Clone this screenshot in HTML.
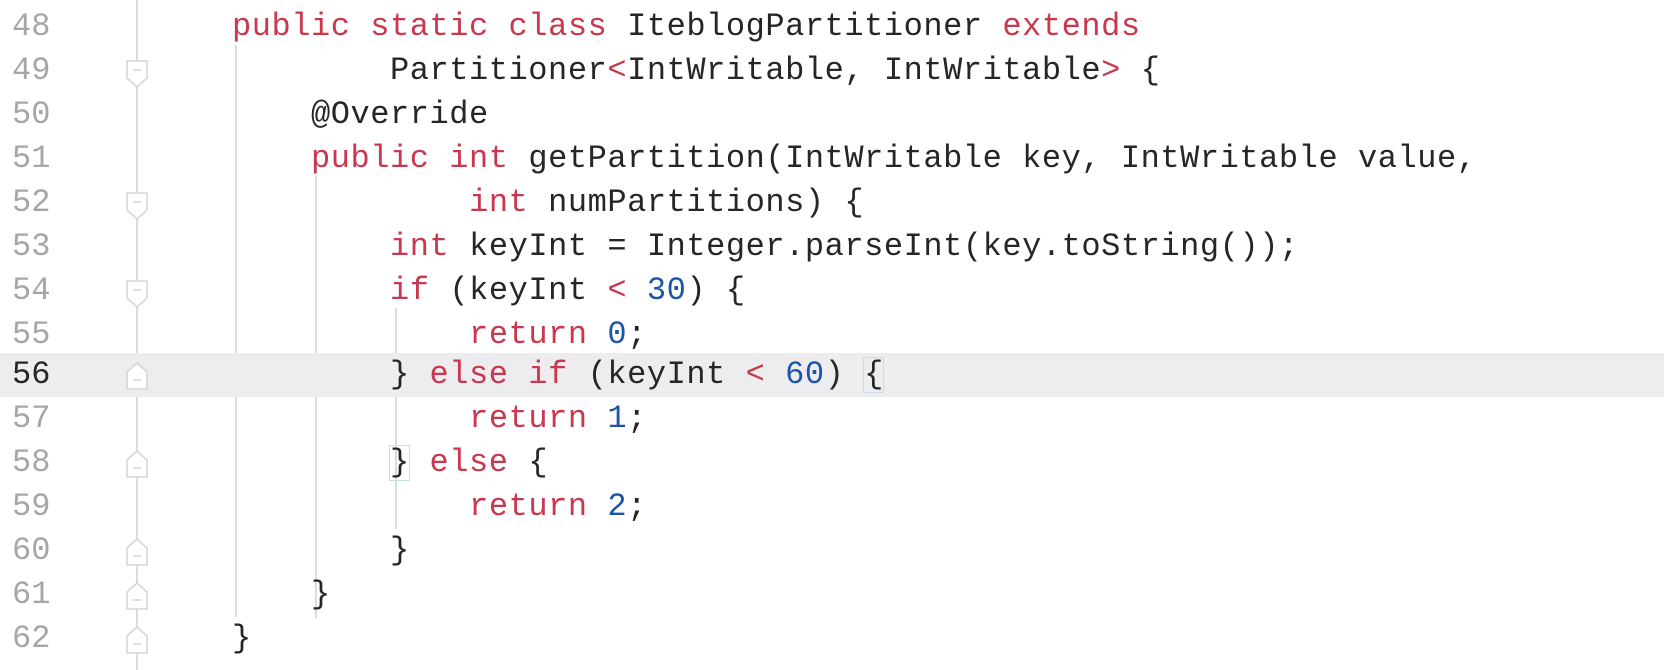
<!DOCTYPE html>
<html><head><meta charset="utf-8"><style>
html,body{margin:0;padding:0;background:#fff;width:1664px;height:670px;overflow:hidden;position:relative}
.l{position:absolute;left:0;width:1664px;height:44px;line-height:44px;font-family:"Liberation Mono",monospace;font-size:32px;letter-spacing:0.55px;white-space:pre;color:#262626}
.n{position:absolute;left:12px;color:#a6a6a6;letter-spacing:0}
.c{position:absolute;left:153px}
.k{color:#c8384f}.d{color:#1c55a8}
.hl{background:#ededf0}
.g{position:absolute;width:2px;background:#dcdcdc}
.f{position:absolute;left:126px;width:22px;height:28px}
.bx{position:absolute;border:1.5px solid #c8dceb}
</style></head><body>
<div class="g" style="left:136px;top:0;height:670px"></div>
<div class="g" style="left:235px;top:45px;height:572px"></div>
<div class="g" style="left:315px;top:176px;height:442px"></div>
<div class="g" style="left:395px;top:308px;height:221px"></div>

<div class="l hl" style="top:353px"></div>

<div class="l" style="top:5px"><span class="n">48</span><span class="c">    <span class="k">public static class</span> IteblogPartitioner <span class="k">extends</span></span></div>
<div class="l" style="top:49px"><span class="n">49</span><span class="c">            Partitioner<span class="k">&lt;</span>IntWritable, IntWritable<span class="k">&gt;</span> {</span></div>
<div class="l" style="top:93px"><span class="n">50</span><span class="c">        @Override</span></div>
<div class="l" style="top:137px"><span class="n">51</span><span class="c">        <span class="k">public int</span> getPartition(IntWritable key, IntWritable value,</span></div>
<div class="l" style="top:181px"><span class="n">52</span><span class="c">                <span class="k">int</span> numPartitions) {</span></div>
<div class="l" style="top:225px"><span class="n">53</span><span class="c">            <span class="k">int</span> keyInt = Integer.parseInt(key.toString());</span></div>
<div class="l" style="top:269px"><span class="n">54</span><span class="c">            <span class="k">if</span> (keyInt <span class="k">&lt;</span> <span class="d">30</span>) {</span></div>
<div class="l" style="top:313px"><span class="n">55</span><span class="c">                <span class="k">return</span> <span class="d">0</span>;</span></div>
<div class="l" style="top:353px"><span class="n" style="color:#262626">56</span><span class="c">            } <span class="k">else if</span> (keyInt <span class="k">&lt;</span> <span class="d">60</span>) {</span></div>
<div class="l" style="top:397px"><span class="n">57</span><span class="c">                <span class="k">return</span> <span class="d">1</span>;</span></div>
<div class="l" style="top:441px"><span class="n">58</span><span class="c">            } <span class="k">else</span> {</span></div>
<div class="l" style="top:485px"><span class="n">59</span><span class="c">                <span class="k">return</span> <span class="d">2</span>;</span></div>
<div class="l" style="top:529px"><span class="n">60</span><span class="c">            }</span></div>
<div class="l" style="top:573px"><span class="n">61</span><span class="c">        }</span></div>
<div class="l" style="top:617px"><span class="n">62</span><span class="c">    }</span></div>

<div class="bx" style="left:863px;top:357px;width:19px;height:34px"></div>
<div class="bx" style="left:389px;top:445px;width:19px;height:34px"></div>

<svg width="0" height="0" style="position:absolute"><defs>
<g id="dn"><path d="M1 1H21V18L11 27L1 18Z" fill="#fff" stroke="#d6d6d6" stroke-width="1.6"/><path d="M7 10H15" stroke="#d0d0d0" stroke-width="1.4"/></g>
<g id="up"><path d="M1 27H21V10L11 1L1 10Z" fill="#fff" stroke="#d6d6d6" stroke-width="1.6"/><path d="M7 18H15" stroke="#d0d0d0" stroke-width="1.4"/></g>
</defs></svg>
<svg class="f" style="top:60px" viewBox="0 0 22 28"><use href="#dn"/></svg>
<svg class="f" style="top:192px" viewBox="0 0 22 28"><use href="#dn"/></svg>
<svg class="f" style="top:280px" viewBox="0 0 22 28"><use href="#dn"/></svg>
<svg class="f" style="top:362px" viewBox="0 0 22 28"><use href="#up"/></svg>
<svg class="f" style="top:450px" viewBox="0 0 22 28"><use href="#up"/></svg>
<svg class="f" style="top:538px" viewBox="0 0 22 28"><use href="#up"/></svg>
<svg class="f" style="top:582px" viewBox="0 0 22 28"><use href="#up"/></svg>
<svg class="f" style="top:626px" viewBox="0 0 22 28"><use href="#up"/></svg>
</body></html>
